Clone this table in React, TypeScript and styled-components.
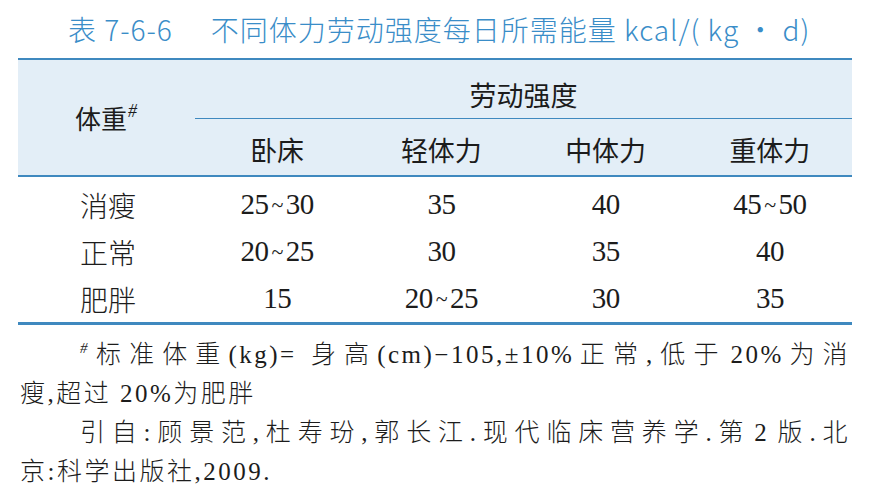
import React from 'react';
import styled, { createGlobalStyle } from 'styled-components';

const LINE = '#3f89bf';
const HEAD_BG = '#e3eef7';
const INK = '#1c1c1c';
const SERIF = "'Liberation Serif', 'Times New Roman'";

const GlobalStyle = createGlobalStyle`
  html, body {
    margin: 0;
    padding: 0;
    background: #ffffff;
  }
`;

const Page = styled.div`
  width: 834px;
  padding: 0 18px;
  color: ${INK};
  font-family: 'Noto Sans CJK SC', sans-serif;
`;

const Title = styled.h1`
  margin: 0;
  height: 58px;
  box-sizing: border-box;
  padding: 12px 0 0 50px;
  font-size: 28px;
  line-height: 34px;
  font-weight: 300;
  letter-spacing: 1px;
  color: #3a8dc8;
  white-space: nowrap;
`;

const TableNo = styled.span`
  margin-right: 38px;
`;

const Sheet = styled.div`
  border-top: 2px solid ${LINE};
  border-bottom: 3px solid ${LINE};
`;

const Grid = styled.div`
  display: grid;
  grid-template-columns: 177px repeat(4, 1fr);
`;

const Head = styled(Grid)`
  grid-template-rows: 59px 56px;
  background: ${HEAD_BG};
  border-bottom: 2px solid ${LINE};
  font-size: 27px;
  font-weight: 400;
`;

const WeightHead = styled.div`
  grid-row: 1 / span 2;
  align-self: center;
  padding-left: 57px;
  font-size: 26px;
`;

const Sup = styled.sup`
  font-family: ${SERIF}, serif;
  font-style: italic;
  font-size: 18px;
  vertical-align: 12px;
  line-height: 0;
  margin-left: 1px;
`;

const GroupHead = styled.div`
  grid-column: 2 / span 4;
  display: flex;
  justify-content: center;
  align-items: center;
  padding-top: 10px;
  box-sizing: border-box;
  border-bottom: 1px solid ${LINE};
`;

const ColHead = styled.div`
  display: flex;
  justify-content: center;
  align-items: center;
  padding-top: 4px;
`;

const Body = styled(Grid)`
  grid-auto-rows: 47px;
  padding-top: 4px;
`;

const RowLabel = styled.div`
  display: flex;
  align-items: center;
  padding-left: 62px;
  font-size: 28px;
  font-weight: 300;
`;

const Value = styled.div`
  display: flex;
  justify-content: center;
  align-items: center;
  font-family: ${SERIF}, serif;
  font-size: 29px;
  letter-spacing: -0.5px;
`;

const Tilde = styled.span`
  margin: 0 3px;
  font-size: 22px;
`;

const Notes = styled.div`
  margin-top: 10px;
  font-family: ${SERIF}, 'Noto Sans CJK SC', serif;
  font-size: 25px;
  line-height: 39px;
  font-weight: 300;
  letter-spacing: 2.5px;
`;

const NoteLine = styled.div<{ $indent?: boolean; $justify?: boolean }>`
  padding-left: ${(p) => (p.$indent ? '62px' : '2px')};
  padding-right: ${(p) => (p.$justify ? '2px' : '0')};
  text-align: ${(p) => (p.$justify ? 'justify' : 'left')};
  text-align-last: ${(p) => (p.$justify ? 'justify' : 'left')};
  white-space: nowrap;
`;

/* a fixed gap that justification does not widen */
const Gap = styled.span`
  display: inline-block;
  width: 4px;
`;

const NoteSup = styled.sup`
  font-size: 15px;
  font-style: italic;
  vertical-align: 10px;
  line-height: 0;
  letter-spacing: 0;
  margin-right: 3px;
`;

const range = (v: string) => {
  const [a, b] = v.split('~');
  if (b === undefined) return v;
  return (
    <>
      {a}
      <Tilde>~</Tilde>
      {b}
    </>
  );
};

const rows: [string, string[]][] = [
  ['消瘦', ['25~30', '35', '40', '45~50']],
  ['正常', ['20~25', '30', '35', '40']],
  ['肥胖', ['15', '20~25', '30', '35']],
];

const levels = ['卧床', '轻体力', '中体力', '重体力'];

const App = () => (
  <>
    <GlobalStyle />
    <Page>
      <Title>
        <TableNo>表 7-6-6</TableNo>不同体力劳动强度每日所需能量 kcal/( kg · d)
      </Title>
      <Sheet>
        <Head>
          <WeightHead>
            体重<Sup>#</Sup>
          </WeightHead>
          <GroupHead>劳动强度</GroupHead>
          {levels.map((l) => (
            <ColHead key={l}>{l}</ColHead>
          ))}
        </Head>
        <Body>
          {rows.map(([label, values]) => (
            <React.Fragment key={label}>
              <RowLabel>{label}</RowLabel>
              {values.map((v, i) => (
                <Value key={i}>{range(v)}</Value>
              ))}
            </React.Fragment>
          ))}
        </Body>
      </Sheet>
      <Notes>
        <NoteLine $indent $justify>
          <NoteSup>#</NoteSup>标准体重(kg)= 身高(cm)−105,±10%正常,低于<Gap />20%为消
        </NoteLine>
        <NoteLine>瘦,超过 20%为肥胖</NoteLine>
        <NoteLine $indent $justify>
          引自:顾景范,杜寿玢,郭长江.现代临床营养学.第<Gap />2<Gap />版.北
        </NoteLine>
        <NoteLine>京:科学出版社,2009.</NoteLine>
      </Notes>
    </Page>
  </>
);

export default App;
